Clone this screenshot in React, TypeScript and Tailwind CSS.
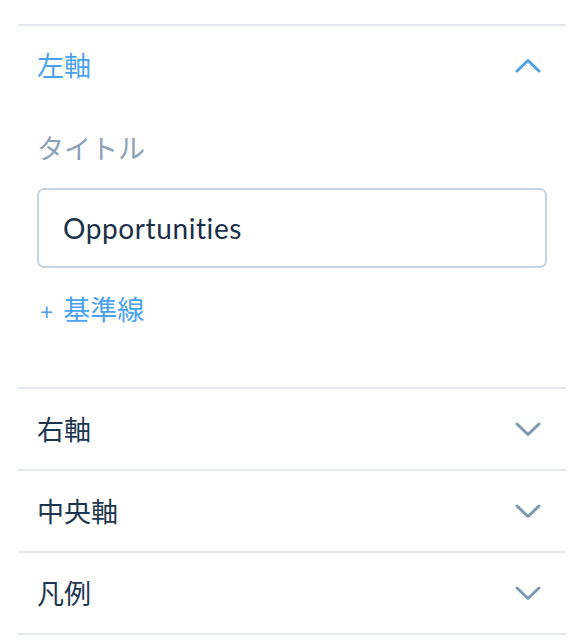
import React from 'react';

const cjk = { fontFamily: '"Noto Sans CJK JP", "Noto Sans", sans-serif' };

function Chevron({ up, color }: { up?: boolean; color: string }) {
  return (
    <svg width="26" height="15" viewBox="0 0 26 15" fill="none">
      <polyline
        points={up ? '2,13 13,2.5 24,13' : '2,2 13,12.5 24,2'}
        stroke={color}
        strokeWidth="3"
        strokeLinecap="round"
        strokeLinejoin="round"
      />
    </svg>
  );
}

function Row({ label }: { label: string }) {
  return (
    <div className="flex h-[82px] items-center justify-between border-b-2 border-[#e5e9ef] pl-[19px] pr-[25px]">
      <span className="text-[27px] leading-[28px] text-[#1c3650]" style={cjk}>{label}</span>
      <Chevron color="#7d98b3" />
    </div>
  );
}

export default function App() {
  return (
    <div className="h-[640px] w-[588px] overflow-hidden bg-white pt-[24px]">
      <div className="ml-[18px] w-[548px]">
        <div className="border-t-2 border-b-2 border-[#e5e9ef] pb-[64px]">
          <div className="flex h-[78px] items-center justify-between pl-[19px] pr-[25px]">
            <span className="text-[27px] leading-[28px] text-[#4aa2ef]" style={cjk}>左軸</span>
            <Chevron up color="#4aa2ef" />
          </div>
          <div className="px-[19px] pt-[30px]">
            <div className="text-[27px] leading-[28px] text-[#8aa0b7]" style={cjk}>タイトル</div>
            <div className="mt-[26px] flex h-[80px] items-center rounded-[7px] border-2 border-[#c8d4e1] px-[24px]">
              <span className="text-[28px] tracking-[0.6px] text-[#1a3049]" style={{ fontFamily: 'Lato, "Noto Sans", sans-serif' }}>Opportunities</span>
            </div>
            <div className="mt-[27px] flex h-[28px] items-center gap-[10px] pl-[3px] text-[#4aa2ef]">
              <span className="translate-y-[2px] text-[23px] leading-[28px]" style={{ fontFamily: 'Lato, sans-serif' }}>+</span>
              <span className="text-[27px] leading-[28px]" style={cjk}>基準線</span>
            </div>
          </div>
        </div>
        <Row label="右軸" />
        <Row label="中央軸" />
        <Row label="凡例" />
      </div>
    </div>
  );
}
